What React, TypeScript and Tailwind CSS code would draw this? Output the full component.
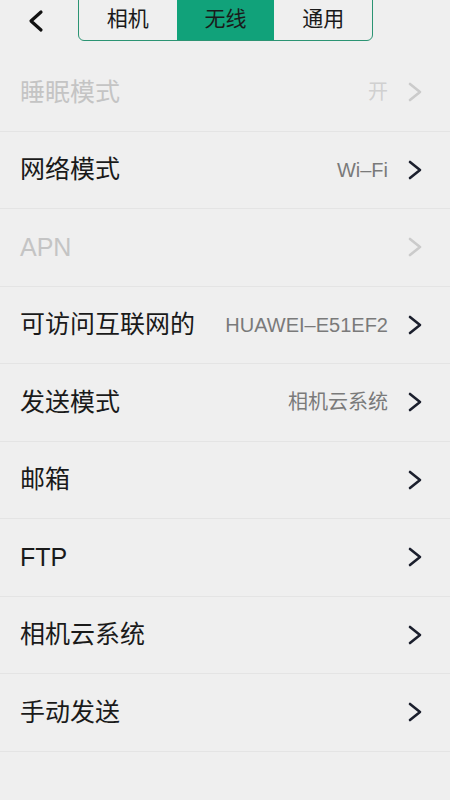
import React from 'react';

type Row = { label: string; value?: string; disabled?: boolean };

const rows: Row[] = [
  { label: '睡眠模式', value: '开', disabled: true },
  { label: '网络模式', value: 'Wi–Fi' },
  { label: 'APN', disabled: true },
  { label: '可访问互联网的', value: 'HUAWEI–E51EF2' },
  { label: '发送模式', value: '相机云系统' },
  { label: '邮箱' },
  { label: 'FTP' },
  { label: '相机云系统' },
  { label: '手动发送' },
];

const Chevron: React.FC<{ disabled?: boolean }> = ({ disabled }) => (
  <svg width="16" height="22" viewBox="0 0 16 22" className="flex-shrink-0">
    <polyline
      points="3,3 13,11 3,19"
      fill="none"
      stroke={disabled ? '#cbcbcb' : '#1b1f2d'}
      strokeWidth="2.6"
      strokeLinecap="round"
      strokeLinejoin="round"
    />
  </svg>
);

const App: React.FC = () => {
  const font = { fontFamily: '"Liberation Sans", "Noto Sans CJK SC", sans-serif' };
  return (
    <div className="w-[450px] h-[800px] bg-[#efefef] overflow-hidden" style={font}>
      {/* Header */}
      <div className="h-[54px] flex items-start">
        <button className="w-[78px] h-[41px] flex items-center pl-[26px]">
          <svg width="20" height="24" viewBox="0 0 20 24">
            <polyline points="15,3 5,12 15,21" fill="none" stroke="#111" strokeWidth="3.2" strokeLinecap="round" strokeLinejoin="round" />
          </svg>
        </button>
        <div className="mt-[-4px] h-[45px] w-[295px] grid grid-cols-3 border border-[#2b9473] rounded-b-[6px] overflow-hidden">
          <div className="flex items-center justify-center text-[21px] text-[#1a1a1a]">相机</div>
          <div className="flex items-center justify-center text-[21px] text-[#1a1a1a] bg-[#11a27a]">无线</div>
          <div className="flex items-center justify-center text-[21px] text-[#1a1a1a]">通用</div>
        </div>
      </div>

      {/* Settings list */}
      <div className="flex flex-col">
        {rows.map((r) => (
          <div key={r.label} className="h-[77.5px] flex items-center pl-5 pr-[27px] border-b border-[#e4e4e4]">
            <span className={`flex-1 text-[25px] ${r.disabled ? 'text-[#c4c4c4]' : 'text-[#1a1a1a]'}`}>{r.label}</span>
            {r.value && (
              <span className={`text-[20px] mr-[19px] ${r.disabled ? 'text-[#d0d0d0]' : 'text-[#7a7a7a]'}`}>{r.value}</span>
            )}
            <Chevron disabled={r.disabled} />
          </div>
        ))}
      </div>
    </div>
  );
};

export default App;
